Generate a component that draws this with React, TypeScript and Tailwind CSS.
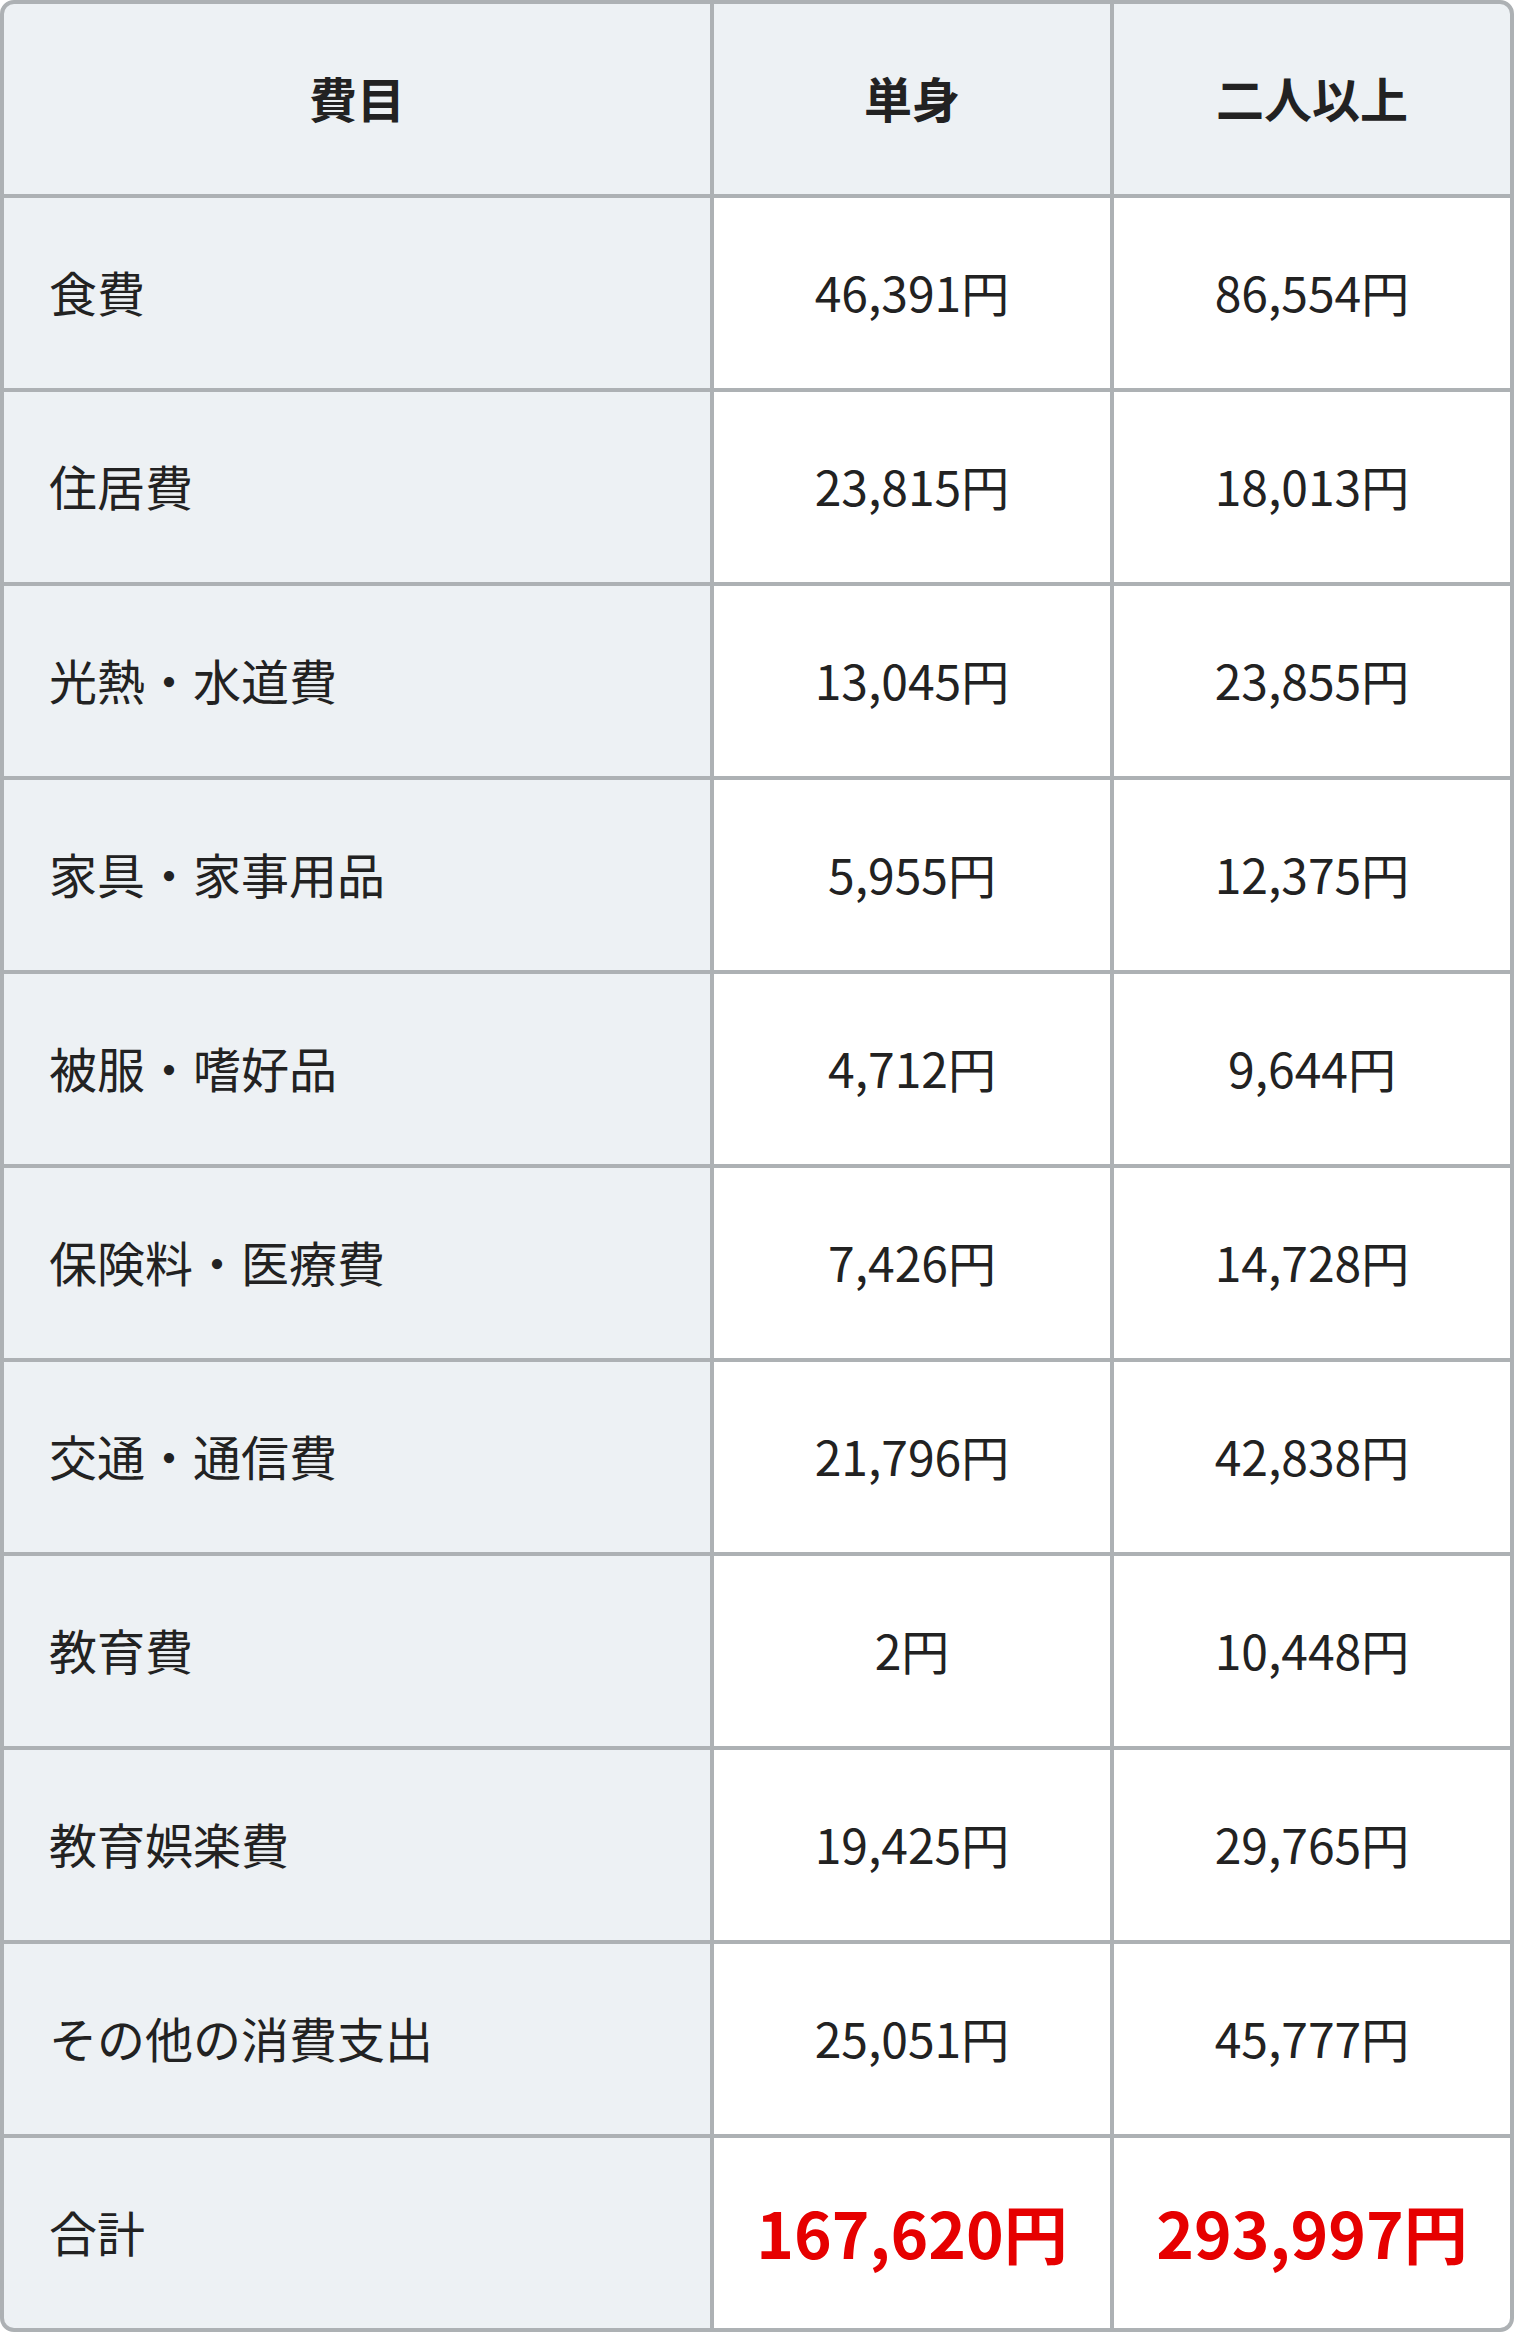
import { Fragment } from "react";

const rows: [string, string, string][] = [
  ["食費", "46,391円", "86,554円"],
  ["住居費", "23,815円", "18,013円"],
  ["光熱・水道費", "13,045円", "23,855円"],
  ["家具・家事用品", "5,955円", "12,375円"],
  ["被服・嗜好品", "4,712円", "9,644円"],
  ["保険料・医療費", "7,426円", "14,728円"],
  ["交通・通信費", "21,796円", "42,838円"],
  ["教育費", "2円", "10,448円"],
  ["教育娯楽費", "19,425円", "29,765円"],
  ["その他の消費支出", "25,051円", "45,777円"],
];

const App = () => {
  return (
    <div className="w-[1514px] h-[2332px] bg-white font-['Noto_Sans_CJK_JP',sans-serif] text-[#222222]">
      <div className="h-full rounded-[14px] border-4 border-[#adb1b4] bg-[#adb1b4] overflow-hidden grid grid-cols-[706px_396px_396px] grid-rows-[repeat(12,190px)] gap-[4px]">
        <div className="bg-[#edf1f4] flex items-center justify-center pb-[4px] text-[48px] font-bold">費目</div>
        <div className="bg-[#edf1f4] flex items-center justify-center pb-[4px] text-[48px] font-bold">単身</div>
        <div className="bg-[#edf1f4] flex items-center justify-center pb-[4px] text-[48px] font-bold">二人以上</div>

        {rows.map(([label, single, multi]) => (
          <Fragment key={label}>
            <div className="bg-[#edf1f4] flex items-center pl-[45px] pb-[4px] text-[48px]">{label}</div>
            <div className="bg-white flex items-center justify-center pb-[4px] text-[48px]">{single}</div>
            <div className="bg-white flex items-center justify-center pb-[4px] text-[48px]">{multi}</div>
          </Fragment>
        ))}

        <div className="bg-[#edf1f4] flex items-center pl-[45px] pb-[4px] text-[48px]">合計</div>
        <div className="bg-white flex items-center justify-center pb-[4px] text-[64px] font-bold text-[#e60000]">167,620円</div>
        <div className="bg-white flex items-center justify-center pb-[4px] text-[64px] font-bold text-[#e60000]">293,997円</div>
      </div>
    </div>
  );
};

export default App;
